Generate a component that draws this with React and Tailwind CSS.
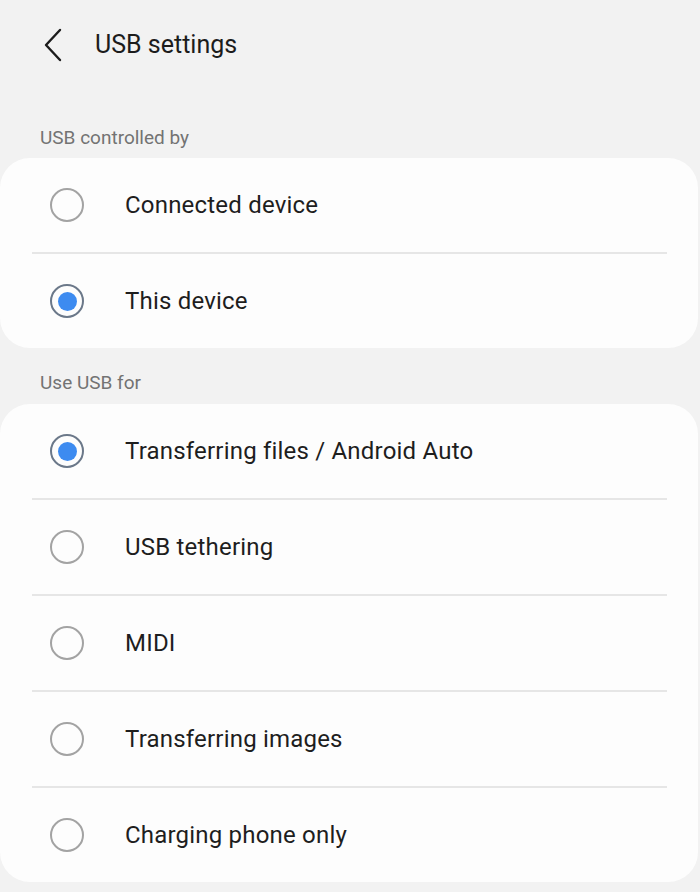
import React, { useState } from 'react';

const FONT = { fontFamily: 'Roboto, "Noto Sans", sans-serif' };

function Radio({ checked }) {
  return (
    <span className="flex h-[34px] w-[34px] shrink-0 items-center justify-center rounded-full">
      {checked ? (
        <span className="flex h-[34px] w-[34px] items-center justify-center rounded-full border-2 border-[#6b7889]">
          <span className="h-[19px] w-[19px] rounded-full bg-[#3d8bf0]" />
        </span>
      ) : (
        <span className="h-[34px] w-[34px] rounded-full border-2 border-[#a3a3a3]" />
      )}
    </span>
  );
}

function OptionGroup({ options, value, onChange }) {
  return (
    <div className="w-[698px] rounded-[30px] bg-[#fdfdfd]">
      {options.map((label, i) => (
        <div key={label}>
          {i > 0 && <div className="ml-[32px] mr-[31px] h-[2px] bg-[#e6e6e6]" />}
          <button
            onClick={() => onChange(label)}
            className="flex h-[94px] w-full items-center text-left"
          >
            <span className="ml-[50px]">
              <Radio checked={value === label} />
            </span>
            <span className="ml-[41px] text-[24px] tracking-[0.2px] text-[#1e1e1e]">{label}</span>
          </button>
        </div>
      ))}
    </div>
  );
}

export default function App() {
  const [controller, setController] = useState('This device');
  const [usage, setUsage] = useState('Transferring files / Android Auto');

  return (
    <div className="h-[892px] w-[700px] overflow-hidden bg-[#f2f2f2]" style={FONT}>
      {/* Header */}
      <div className="flex h-[90px] items-center">
        <button className="ml-[40px] flex h-[34px] w-[24px] items-center justify-center">
          <svg width="20" height="34" viewBox="0 0 20 34" fill="none">
            <path d="M18 2 L4 17 L18 32" stroke="#1c1c1c" strokeWidth="2.4" strokeLinecap="round" strokeLinejoin="round" />
          </svg>
        </button>
        <h1 className="ml-[31px] text-[25px] text-[#1c1c1c]">USB settings</h1>
      </div>

      <div className="ml-[40px] mt-[34px] text-[19px] leading-[28px] text-[#737373]">USB controlled by</div>
      <div className="mt-[6px]">
        <OptionGroup
          options={['Connected device', 'This device']}
          value={controller}
          onChange={setController}
        />
      </div>

      <div className="ml-[40px] mt-[21px] text-[19px] leading-[28px] text-[#737373]">Use USB for</div>
      <div className="mt-[7px]">
        <OptionGroup
          options={[
            'Transferring files / Android Auto',
            'USB tethering',
            'MIDI',
            'Transferring images',
            'Charging phone only',
          ]}
          value={usage}
          onChange={setUsage}
        />
      </div>
    </div>
  );
}
